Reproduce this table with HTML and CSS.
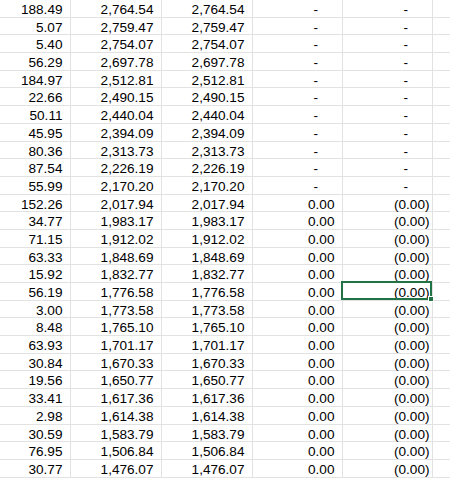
FILE: index.html
```
<!DOCTYPE html>
<html>
<head>
<meta charset="utf-8">
<link rel="stylesheet" href="styles.css">
</head>
<body>
<div class="sheet">
<div class="c n">188.49</div><div class="c n">2,764.54</div><div class="c n">2,764.54</div><div class="c d">-</div><div class="c d">-</div><div class="c"></div>
<div class="c n">5.07</div><div class="c n">2,759.47</div><div class="c n">2,759.47</div><div class="c d">-</div><div class="c d">-</div><div class="c"></div>
<div class="c n">5.40</div><div class="c n">2,754.07</div><div class="c n">2,754.07</div><div class="c d">-</div><div class="c d">-</div><div class="c"></div>
<div class="c n">56.29</div><div class="c n">2,697.78</div><div class="c n">2,697.78</div><div class="c d">-</div><div class="c d">-</div><div class="c"></div>
<div class="c n">184.97</div><div class="c n">2,512.81</div><div class="c n">2,512.81</div><div class="c d">-</div><div class="c d">-</div><div class="c"></div>
<div class="c n">22.66</div><div class="c n">2,490.15</div><div class="c n">2,490.15</div><div class="c d">-</div><div class="c d">-</div><div class="c"></div>
<div class="c n">50.11</div><div class="c n">2,440.04</div><div class="c n">2,440.04</div><div class="c d">-</div><div class="c d">-</div><div class="c"></div>
<div class="c n">45.95</div><div class="c n">2,394.09</div><div class="c n">2,394.09</div><div class="c d">-</div><div class="c d">-</div><div class="c"></div>
<div class="c n">80.36</div><div class="c n">2,313.73</div><div class="c n">2,313.73</div><div class="c d">-</div><div class="c d">-</div><div class="c"></div>
<div class="c n">87.54</div><div class="c n">2,226.19</div><div class="c n">2,226.19</div><div class="c d">-</div><div class="c d">-</div><div class="c"></div>
<div class="c n">55.99</div><div class="c n">2,170.20</div><div class="c n">2,170.20</div><div class="c d">-</div><div class="c d">-</div><div class="c"></div>
<div class="c n">152.26</div><div class="c n">2,017.94</div><div class="c n">2,017.94</div><div class="c n">0.00</div><div class="c p">(0.00)</div><div class="c"></div>
<div class="c n">34.77</div><div class="c n">1,983.17</div><div class="c n">1,983.17</div><div class="c n">0.00</div><div class="c p">(0.00)</div><div class="c"></div>
<div class="c n">71.15</div><div class="c n">1,912.02</div><div class="c n">1,912.02</div><div class="c n">0.00</div><div class="c p">(0.00)</div><div class="c"></div>
<div class="c n">63.33</div><div class="c n">1,848.69</div><div class="c n">1,848.69</div><div class="c n">0.00</div><div class="c p">(0.00)</div><div class="c"></div>
<div class="c n">15.92</div><div class="c n">1,832.77</div><div class="c n">1,832.77</div><div class="c n">0.00</div><div class="c p">(0.00)</div><div class="c"></div>
<div class="c n">56.19</div><div class="c n">1,776.58</div><div class="c n">1,776.58</div><div class="c n">0.00</div><div class="c p sel">(0.00)</div><div class="c"></div>
<div class="c n">3.00</div><div class="c n">1,773.58</div><div class="c n">1,773.58</div><div class="c n">0.00</div><div class="c p">(0.00)</div><div class="c"></div>
<div class="c n">8.48</div><div class="c n">1,765.10</div><div class="c n">1,765.10</div><div class="c n">0.00</div><div class="c p">(0.00)</div><div class="c"></div>
<div class="c n">63.93</div><div class="c n">1,701.17</div><div class="c n">1,701.17</div><div class="c n">0.00</div><div class="c p">(0.00)</div><div class="c"></div>
<div class="c n">30.84</div><div class="c n">1,670.33</div><div class="c n">1,670.33</div><div class="c n">0.00</div><div class="c p">(0.00)</div><div class="c"></div>
<div class="c n">19.56</div><div class="c n">1,650.77</div><div class="c n">1,650.77</div><div class="c n">0.00</div><div class="c p">(0.00)</div><div class="c"></div>
<div class="c n">33.41</div><div class="c n">1,617.36</div><div class="c n">1,617.36</div><div class="c n">0.00</div><div class="c p">(0.00)</div><div class="c"></div>
<div class="c n">2.98</div><div class="c n">1,614.38</div><div class="c n">1,614.38</div><div class="c n">0.00</div><div class="c p">(0.00)</div><div class="c"></div>
<div class="c n">30.59</div><div class="c n">1,583.79</div><div class="c n">1,583.79</div><div class="c n">0.00</div><div class="c p">(0.00)</div><div class="c"></div>
<div class="c n">76.95</div><div class="c n">1,506.84</div><div class="c n">1,506.84</div><div class="c n">0.00</div><div class="c p">(0.00)</div><div class="c"></div>
<div class="c n">30.77</div><div class="c n">1,476.07</div><div class="c n">1,476.07</div><div class="c n">0.00</div><div class="c p">(0.00)</div><div class="c"></div>
</div>
</body>
</html>
```
FILE: styles.css
```
html, body {
  margin: 0;
  padding: 0;
  background: #fff;
  overflow: hidden;
}
.sheet {
  display: grid;
  grid-template-columns: 71px 91px 91px 90px 90px 18px;
  grid-auto-rows: 17.7px;
  font-family: "Liberation Sans", Arial, sans-serif;
  font-size: 13.6px;
  color: #000;
}
.c {
  box-sizing: border-box;
  border-right: 1px solid #e2e2e2;
  border-bottom: 1px solid #e2e2e2;
  text-align: right;
  line-height: 17.7px;
  padding-top: 1px;
  white-space: nowrap;
  overflow: visible;
}
.n { padding-right: 7.5px; }
.p { padding-right: 2.5px; }
.d { padding-right: 24px; }
.sel { position: relative; }
.sel::before {
  content: "";
  position: absolute;
  top: -2px;
  left: -2px;
  right: 0;
  bottom: 0;
  border: 2px solid #217346;
}
.sel::after {
  content: "";
  position: absolute;
  right: -2px;
  bottom: -2px;
  width: 4px;
  height: 4px;
  background: #217346;
  border: 1px solid #fff;
}
```
